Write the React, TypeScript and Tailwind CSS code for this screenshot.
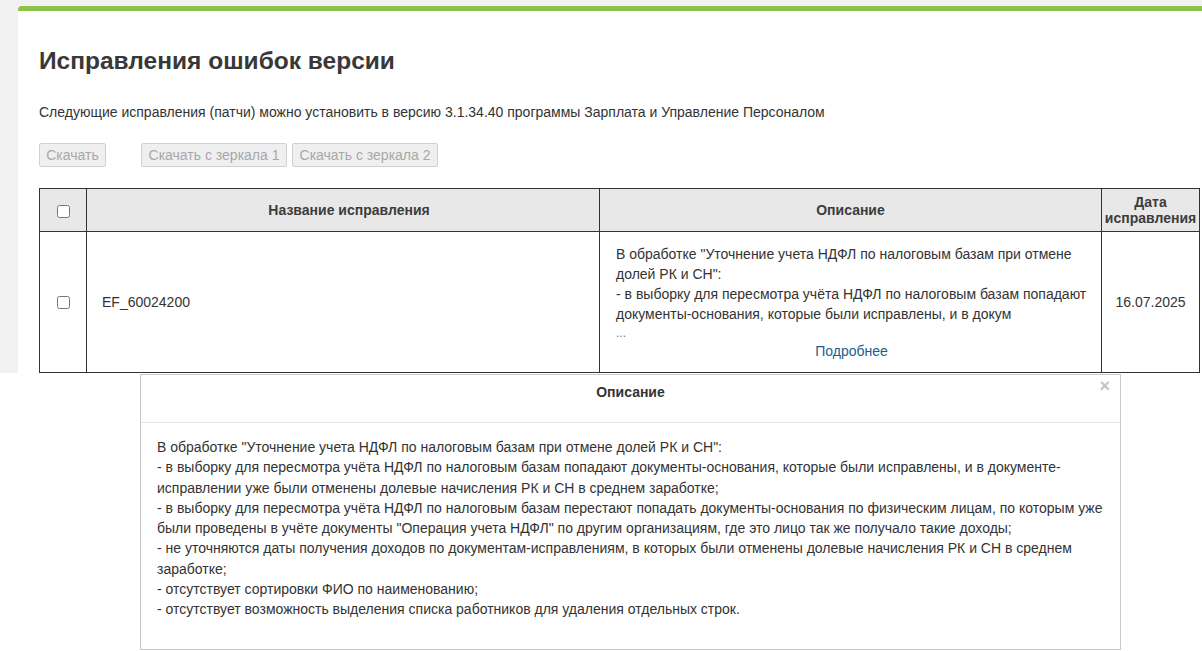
import type { ReactNode } from "react";

const font = { fontFamily: '"Liberation Sans", Arial, sans-serif' };

const details = [
  'В обработке "Уточнение учета НДФЛ по налоговым базам при отмене долей РК и СН":',
  "- в выборку для пересмотра учёта НДФЛ по налоговым базам попадают документы-основания, которые были исправлены, и в документе-исправлении уже были отменены долевые начисления РК и СН в среднем заработке;",
  '- в выборку для пересмотра учёта НДФЛ по налоговым базам перестают попадать документы-основания по физическим лицам, по которым уже были проведены в учёте документы "Операция учета НДФЛ" по другим организациям, где это лицо так же получало такие доходы;',
  "- не уточняются даты получения доходов по документам-исправлениям, в которых были отменены долевые начисления РК и СН в среднем заработке;",
  "- отсутствует сортировки ФИО по наименованию;",
  "- отсутствует возможность выделения списка работников для удаления отдельных строк.",
];

function Btn({ children, className = "" }: { children: ReactNode; className?: string }) {
  return (
    <button
      disabled
      className={`h-[24px] whitespace-nowrap rounded-[2px] border border-[#d0d0d0] bg-[#efefef] px-0 text-center text-[14px] leading-none text-[#a8a8a8] ${className}`}
    >
      {children}
    </button>
  );
}

function Box() {
  return <input type="checkbox" className="m-0 h-[13px] w-[13px] align-middle" />;
}

export default function App() {
  return (
    <div className="h-[651px] w-[1202px] overflow-hidden bg-white text-[#333]" style={font}>
      {/* page behind the dialog */}
      <div className="h-[373px] overflow-hidden bg-[#f2f2f2] pl-[18px] pt-[6px]">
        <div className="h-[400px] rounded-tl-[4px] border-t-[5px] border-[#8bc34a] bg-white pl-[21px] pt-[37px]">
          <h1 className="text-[24.5px] font-bold leading-[26px] text-[#383838]">Исправления ошибок версии</h1>
          <p className="mt-[28px] text-[14px] leading-[20px]">
            Следующие исправления (патчи) можно установить в версию 3.1.34.40 программы Зарплата и Управление Персоналом
          </p>
          <div className="mt-[21px] flex">
            <Btn className="w-[67px]">Скачать</Btn>
            <Btn className="ml-[35px] w-[146px]">Скачать с зеркала 1</Btn>
            <Btn className="ml-[5px] w-[146px]">Скачать с зеркала 2</Btn>
          </div>
          <table className="mt-[21px] w-[1160px] table-fixed border-collapse text-[14px]">
            <colgroup>
              <col className="w-[47px]" />
              <col className="w-[513px]" />
              <col className="w-[502px]" />
              <col className="w-[98px]" />
            </colgroup>
            <thead>
              <tr className="h-[43px] bg-[#e8e8e8] font-bold leading-[16px] text-[#3c3c3c]">
                <th className="border border-[#333] text-center">
                  <Box />
                </th>
                <th className="border border-[#333] pl-[12px] text-center">Название исправления</th>
                <th className="border border-[#333] text-center">Описание</th>
                <th className="border border-[#333] text-center">
                  Дата
                  <br />
                  исправления
                </th>
              </tr>
            </thead>
            <tbody>
              <tr className="h-[141px]">
                <td className="border border-[#333] text-center">
                  <Box />
                </td>
                <td className="border border-[#333] pl-[15px]">EF_60024200</td>
                <td className="border border-[#333] pl-[16px] pr-[14px] leading-[20px]">
                  В обработке "Уточнение учета НДФЛ по налоговым базам при отмене долей РК и СН":
                  <br />- в выборку для пересмотра учёта НДФЛ по налоговым базам попадают документы-основания, которые
                  были исправлены, и в докум
                  <div className="text-[12px] leading-[18px] text-[#777]">...</div>
                  <div className="text-center leading-[18px] text-[#215d8c]">Подробнее</div>
                </td>
                <td className="border border-[#333] text-center">16.07.2025</td>
              </tr>
            </tbody>
          </table>
        </div>
      </div>

      {/* description dialog */}
      <div className="pl-[140px] pt-[1px]">
        <div className="relative h-[276px] w-[981px] border border-[#c8c8c8] bg-white">
          <div className="h-[48px] border-b border-[#e5e5e5] pt-[7px] text-center text-[14px] font-bold leading-[20px]">
            Описание
          </div>
          <span className="absolute right-[10px] top-[1px] text-[18px] font-bold leading-[20px] text-[#c4c4c4]">×</span>
          <div className="px-[16px] pt-[14px] text-[14px] leading-[20.25px]">
            {details.map((line) => (
              <div key={line}>{line}</div>
            ))}
          </div>
        </div>
      </div>
    </div>
  );
}
